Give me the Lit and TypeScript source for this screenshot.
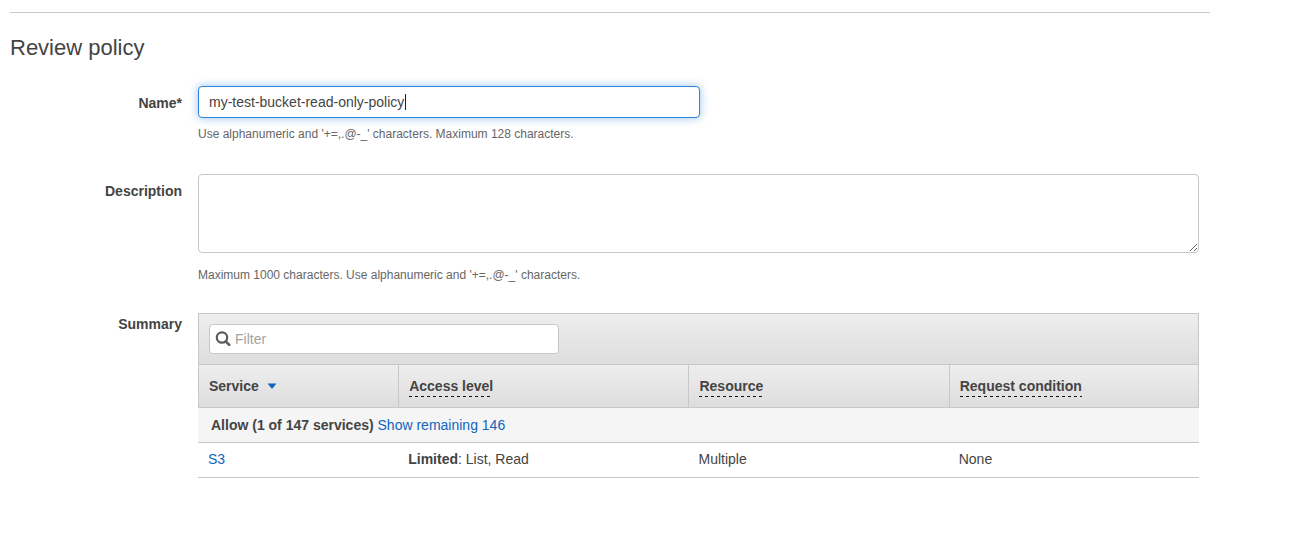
import { LitElement, html, css } from "lit";
import { customElement, state, query } from "lit/decorators.js";
import { styleMap } from "lit/directives/style-map.js";

interface PolicyRow {
  service: string;
  level: string;
  actions: string;
  resource: string;
  condition: string;
}

@customElement("policy-summary")
class PolicySummary extends LitElement {
  static styles = css`
    :host {
      display: block;
      min-width: 0;
    }
    .toolbar {
      padding: 10px;
      border: 1px solid #c8c8c8;
      border-bottom: 0;
      background: linear-gradient(#eeeeee, #dddddd);
    }
    .search {
      display: flex;
      align-items: center;
      gap: 4px;
      box-sizing: border-box;
      width: 350px;
      max-width: 100%;
      height: 30px;
      padding: 0 5px;
      border: 1px solid #c8c8c8;
      border-radius: 4px;
      background: #fff;
    }
    .search svg {
      flex: none;
      display: block;
    }
    .filter {
      flex: 1;
      min-width: 0;
      padding: 0;
      border: 0;
      outline: 0;
      background: none;
      color: #444;
      font: inherit;
    }
    .filter::placeholder {
      color: #a4a4a4;
      opacity: 1;
    }
    table {
      width: 100%;
      table-layout: fixed;
      border-collapse: separate;
      border-spacing: 0;
    }
    th,
    td {
      box-sizing: border-box;
      padding: 0 10px;
      text-align: left;
      border-bottom: 1px solid #c8c8c8;
    }
    thead th {
      height: 44px;
      border-top: 1px solid #c8c8c8;
      border-left: 1px solid #c8c8c8;
      background: linear-gradient(#eeeeee, #dddddd);
    }
    thead th:last-child {
      border-right: 1px solid #c8c8c8;
    }
    .c1 {
      width: 20%;
    }
    .c2 {
      width: 29%;
    }
    .c3 {
      width: 26%;
    }
    .sort {
      display: inline-flex;
      align-items: center;
      gap: 8px;
      padding: 0;
      border: 0;
      background: none;
      color: inherit;
      font: inherit;
    }
    .hint {
      display: inline-block;
      background: repeating-linear-gradient(90deg, #111 0 3px, transparent 3px 6px) left bottom / 100% 1px no-repeat;
      line-height: 22px;
    }
    tbody th,
    tbody td {
      height: 35px;
    }
    tbody td {
      padding-bottom: 2px;
    }
    .group {
      padding: 0 13px;
      background: #f5f5f5;
    }
    .group a {
      font-weight: normal;
    }
    a {
      color: #1166bb;
      text-decoration: none;
    }
  `;

  @state() private rows: PolicyRow[] = [
    { service: "S3", level: "Limited", actions: "List, Read", resource: "Multiple", condition: "None" },
  ];

  render() {
    return html`
      <div class="toolbar">
        <div class="search">
          <svg width="16" height="16" viewBox="0 0 16 16" fill="none" stroke="#5c5c5c" aria-hidden="true">
            <circle cx="7" cy="6.5" r="5.2" stroke-width="2.2" />
            <path d="M10.8 10.4 L14.2 13.8" stroke-width="2.6" stroke-linecap="round" />
          </svg>
          <input class="filter" type="text" placeholder="Filter" aria-label="Filter" />
        </div>
      </div>
      <table>
        <thead>
          <tr>
            <th class="c1" aria-sort="descending">
              <button class="sort" type="button">
                Service
                <svg width="10" height="6" viewBox="0 0 10 6" aria-hidden="true">
                  <path d="M0.5 0.5 H9.5 L5.6 5.2 Q5 5.8 4.4 5.2 Z" fill="#1166bb" />
                </svg>
              </button>
            </th>
            <th class="c2"><span class="hint">Access level</span></th>
            <th class="c3"><span class="hint">Resource</span></th>
            <th><span class="hint">Request condition</span></th>
          </tr>
        </thead>
        <tbody>
          <tr>
            <th class="group" colspan="4">Allow (1 of 147 services) <a href="#remaining">Show remaining 146</a></th>
          </tr>
          ${this.rows.map(
            (r) => html`<tr>
              <td><a href="#service">${r.service}</a></td>
              <td><b>${r.level}</b>: ${r.actions}</td>
              <td>${r.resource}</td>
              <td>${r.condition}</td>
            </tr>`
          )}
        </tbody>
      </table>
    `;
  }
}

@customElement("app-root")
class AppRoot extends LitElement {
  static styles = css`
    :host {
      display: block;
      padding: 12px 10px;
      background: #fff;
      color: #444;
      font: 14px/20px "Liberation Sans", Arial, sans-serif;
    }
    main {
      max-width: 1200px;
      border-top: 1px solid #c8c8c8;
    }
    h1 {
      margin: 20px 0 24px;
      font-size: 22px;
      line-height: 29px;
      font-weight: normal;
    }
    form {
      display: grid;
      grid-template-columns: 172px minmax(0, 1fr);
      column-gap: 16px;
      row-gap: 28px;
      padding-right: 11px;
    }
    .label {
      padding-top: 7px;
      text-align: right;
      font-weight: bold;
    }
    .label-summary {
      padding-top: 1px;
    }
    .name,
    .description {
      display: block;
      box-sizing: border-box;
      width: 100%;
      border: 1px solid #c8c8c8;
      border-radius: 4px;
      padding: 0 10px;
      outline: 0;
      background: #fff;
      color: #444;
      font: inherit;
    }
    .name {
      max-width: 502px;
      height: 32px;
      border-color: #2e86de;
      box-shadow: 0 0 8px rgba(46, 134, 222, 0.5);
      caret-color: transparent;
      background-image: linear-gradient(#222, #222);
      background-size: 1px 16px;
      background-repeat: no-repeat;
      background-origin: content-box;
    }
    .description {
      height: 79px;
      padding: 6px 10px;
      resize: both;
    }
    .note {
      margin: 6px 0 2px;
      color: #666;
      font-size: 12px;
    }
    .note-description {
      margin: 12px 0 0;
    }
  `;

  @state() private policyName = "my-test-bucket-read-only-policy";
  @state() private caret = 0;
  @query(".name") private nameInput!: HTMLInputElement;

  firstUpdated() {
    const end = this.policyName.length;
    this.nameInput.focus();
    this.nameInput.setSelectionRange(end, end);
    this.placeCaret();
  }

  // Measures the text before the cursor so the solid caret sits right after it.
  private placeCaret() {
    const ctx = document.createElement("canvas").getContext("2d")!;
    const style = getComputedStyle(this.nameInput);
    ctx.font = `${style.fontSize} ${style.fontFamily}`;
    const before = this.nameInput.value.slice(0, this.nameInput.selectionEnd ?? undefined);
    this.caret = Math.ceil(ctx.measureText(before).width);
  }

  private onInput() {
    this.policyName = this.nameInput.value;
    this.placeCaret();
  }

  render() {
    return html`
      <main>
        <h1>Review policy</h1>
        <form>
          <label class="label" for="name">Name*</label>
          <div>
            <input
              class="name"
              id="name"
              type="text"
              spellcheck="false"
              .value=${this.policyName}
              style=${styleMap({ backgroundPosition: `${this.caret}px center` })}
              @input=${this.onInput}
              @keyup=${this.placeCaret}
              @click=${this.placeCaret}
            />
            <p class="note">Use alphanumeric and '+=,.@-_' characters. Maximum 128 characters.</p>
          </div>
          <label class="label" for="description">Description</label>
          <div>
            <textarea class="description" id="description"></textarea>
            <p class="note note-description">Maximum 1000 characters. Use alphanumeric and '+=,.@-_' characters.</p>
          </div>
          <div class="label label-summary">Summary</div>
          <policy-summary></policy-summary>
        </form>
      </main>
    `;
  }
}
